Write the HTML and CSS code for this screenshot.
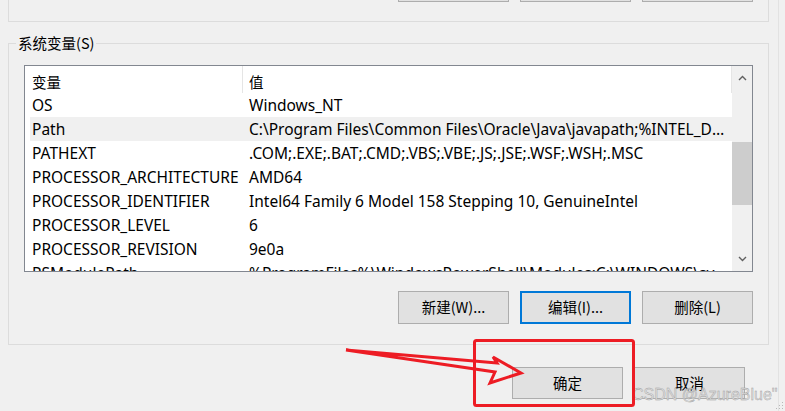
FILE: index.html
```html
<!DOCTYPE html>
<html lang="zh-CN">
<head>
<meta charset="utf-8">
<title>系统变量</title>
<link rel="stylesheet" href="styles.css">
</head>
<body>
<div class="dialog">
  <div class="edge-line"></div>
  <div class="top-box">
    <div class="btn-row top-btns">
      <div class="btn stub"></div>
      <div class="btn stub"></div>
      <div class="btn stub"></div>
    </div>
  </div>

  <fieldset class="group">
    <legend class="group-label">系统变量(S)</legend>
    <div class="listview">
      <div class="list-main">
        <div class="list-head">
          <div class="col-name">变量</div>
          <div class="col-val">值</div>
          <div class="head-end"></div>
        </div>
        <div class="row"><div class="col-name">OS</div><div class="col-val">Windows_NT</div></div>
        <div class="row selected"><div class="col-name">Path</div><div class="col-val">C:\Program Files\Common Files\Oracle\Java\javapath;%INTEL_DEV_REDIST%redist\intel64\compiler</div></div>
        <div class="row"><div class="col-name">PATHEXT</div><div class="col-val">.COM;.EXE;.BAT;.CMD;.VBS;.VBE;.JS;.JSE;.WSF;.WSH;.MSC</div></div>
        <div class="row"><div class="col-name">PROCESSOR_ARCHITECTURE</div><div class="col-val">AMD64</div></div>
        <div class="row"><div class="col-name">PROCESSOR_IDENTIFIER</div><div class="col-val">Intel64 Family 6 Model 158 Stepping 10, GenuineIntel</div></div>
        <div class="row"><div class="col-name">PROCESSOR_LEVEL</div><div class="col-val">6</div></div>
        <div class="row"><div class="col-name">PROCESSOR_REVISION</div><div class="col-val">9e0a</div></div>
        <div class="row"><div class="col-name">PSModulePath</div><div class="col-val">%ProgramFiles%\WindowsPowerShell\Modules;C:\WINDOWS\system32\WindowsPowerShell</div></div>
      </div>
      <div class="scrollbar">
        <div class="sb-arrow">
          <svg width="9" height="6" viewBox="0 0 9 6"><path d="M1 5 L4.5 1.5 L8 5" fill="none" stroke="#606060" stroke-width="1.4"/></svg>
        </div>
        <div class="sb-track">
          <div class="sb-thumb"></div>
        </div>
        <div class="sb-arrow">
          <svg width="9" height="6" viewBox="0 0 9 6"><path d="M1 1 L4.5 4.5 L8 1" fill="none" stroke="#606060" stroke-width="1.4"/></svg>
        </div>
      </div>
    </div>
    <div class="btn-row group-btns">
      <div class="btn">新建(W)...</div>
      <div class="btn focused">编辑(I)...</div>
      <div class="btn">删除(L)</div>
    </div>
  </fieldset>

  <div class="btn-row footer">
    <div class="btn">确定</div>
    <div class="btn">取消</div>
  </div>

  <div class="watermark">CSDN @AzureBlue"</div>
  <div class="grip">
    <svg width="8" height="8" viewBox="0 0 8 8">
      <rect x="6" y="0" width="1" height="1" fill="#b8b8b8"/>
      <rect x="3" y="3" width="1" height="1" fill="#b8b8b8"/>
      <rect x="6" y="3" width="1" height="1" fill="#b8b8b8"/>
      <rect x="0" y="6" width="1" height="1" fill="#b8b8b8"/>
      <rect x="3" y="6" width="1" height="1" fill="#b8b8b8"/>
      <rect x="6" y="6" width="1" height="1" fill="#b8b8b8"/>
    </svg>
  </div>

  <svg class="annotation" width="785" height="411" viewBox="0 0 785 411">
    <rect x="474.5" y="340.5" width="159" height="65" rx="2" fill="none" stroke="#ed1c24" stroke-width="3"/>
    <path d="M346 350 L497 363 L493 357 L521 373 L490 383 L495 372 Z" fill="none" stroke="#ed1c24" stroke-width="3" stroke-linejoin="miter"/>
  </svg>
</div>
</body>
</html>
```

FILE: styles.css
```css
* { box-sizing: border-box; }

html, body {
  margin: 0;
  padding: 0;
  background: #f0f0f0;
}

body {
  font-family: "Noto Sans", "Noto Sans CJK SC", sans-serif;
  font-size: 15.5px;
  color: #000;
}

.dialog {
  position: relative;
  width: 785px;
  height: 411px;
  overflow: hidden;
  background: #f0f0f0;
}

.edge-line {
  position: absolute;
  left: 778px;
  top: 0;
  width: 1px;
  height: 411px;
  background: #e2e2e2;
}

.top-box {
  margin-left: 8px;
  width: 761px;
  height: 22px;
  border: 1px solid #dcdcdc;
  border-top: none;
}

.btn-row {
  display: flex;
  justify-content: flex-end;
  gap: 11px;
}

.top-btns {
  padding-right: 15px;
}

.btn {
  width: 111px;
  height: 33px;
  background: #e1e1e1;
  border: 1px solid #adadad;
  display: flex;
  align-items: center;
  justify-content: center;
  font-family: "Noto Sans CJK SC", "Noto Sans", sans-serif;
  font-size: 14.5px;
  line-height: 1;
}

.btn.stub {
  height: 2px;
  border-top: none;
}

.btn.focused {
  border: 2px solid #0078d7;
}

.group {
  margin: 13px 0 0 8px;
  width: 761px;
  min-width: 0;
  border: 1px solid #dcdcdc;
  padding: 14px 15px 20px 15px;
}

.group-label {
  margin-left: -8px;
  padding: 0 2px;
  line-height: 16px;
  font-family: "Noto Sans CJK SC", "Noto Sans", sans-serif;
  font-size: 14.5px;
}

.listview {
  width: 729px;
  height: 207px;
  border: 1px solid #828790;
  background: #fff;
  display: flex;
}

.list-main {
  flex: 1;
  min-width: 0;
  overflow: hidden;
}

.list-head {
  height: 27px;
  display: flex;
  align-items: center;
  padding-left: 5px;
  padding-top: 3px;
  font-family: "Noto Sans CJK SC", "Noto Sans", sans-serif;
  font-size: 14.5px;
}

.list-head .col-val {
  border-left: 1px solid #e5e5e5;
  align-self: stretch;
  display: flex;
  align-items: center;
  padding-left: 6px;
  margin-top: -3px;
  padding-top: 3px;
}

.head-end {
  width: 1px;
  align-self: stretch;
  background: #e5e5e5;
  margin-top: -3px;
}

.row {
  height: 24px;
  margin-left: 5px;
  display: flex;
  align-items: center;
  white-space: nowrap;
}

.row.selected {
  background: #f0f0f0;
}

.col-name {
  width: 212px;
  flex: none;
  padding-left: 2px;
  overflow: hidden;
  white-space: nowrap;
}

.col-val {
  flex: 1;
  min-width: 0;
  padding-left: 7px;
  overflow: hidden;
  text-overflow: ellipsis;
  white-space: nowrap;
  padding-right: 2px;
}

.scrollbar {
  width: 20px;
  flex: none;
  background: #f0f0f0;
  display: flex;
  flex-direction: column;
}

.sb-arrow {
  height: 24px;
  display: flex;
  align-items: center;
  justify-content: center;
}

.sb-track {
  flex: 1;
  position: relative;
}

.sb-thumb {
  margin-top: 52px;
  height: 63px;
  background: #cdcdcd;
}

.group-btns {
  margin-top: 19px;
}

.footer {
  margin-top: 22px;
  padding-right: 40px;
}

.footer .btn {
  height: 32px;
}

.watermark {
  position: absolute;
  left: 632px;
  top: 386px;
  font-family: "Liberation Sans", Arial, sans-serif;
  font-size: 16px;
  color: #e0e0e0;
  -webkit-text-stroke: 0.4px #9c9c9c;
  white-space: nowrap;
}

.grip {
  position: absolute;
  right: 1px;
  bottom: 1px;
  width: 8px;
  height: 8px;
  line-height: 0;
}

.annotation {
  position: absolute;
  left: 0;
  top: 0;
  pointer-events: none;
}
```
